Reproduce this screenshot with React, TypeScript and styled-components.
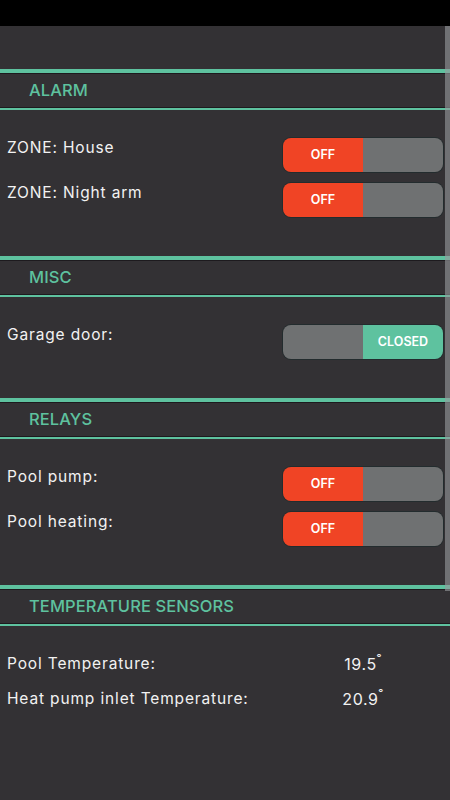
import { createGlobalStyle } from 'styled-components';
import styled from 'styled-components';

const colors = {
  bg: '#333134',
  green: '#5ec29f',
  red: '#f04425',
  gray: '#6f7172',
  dark: '#1d1a1e',
  text: '#f2f2f2',
};

const GlobalStyle = createGlobalStyle`
  html, body {
    margin: 0;
    padding: 0;
    background: ${colors.bg};
  }
  body {
    font-family: Inter, 'Open Sans', sans-serif;
  }
`;

type SwitchRow = { label: string; on: boolean; onText: string; offText: string };
type TempRow = { label: string; value: string };

const alarmRows: SwitchRow[] = [
  { label: 'ZONE: House', on: false, onText: 'ON', offText: 'OFF' },
  { label: 'ZONE: Night arm', on: false, onText: 'ON', offText: 'OFF' },
];
const miscRows: SwitchRow[] = [
  { label: 'Garage door:', on: true, onText: 'CLOSED', offText: 'OPEN' },
];
const relayRows: SwitchRow[] = [
  { label: 'Pool pump:', on: false, onText: 'ON', offText: 'OFF' },
  { label: 'Pool heating:', on: false, onText: 'ON', offText: 'OFF' },
];
const temps: TempRow[] = [
  { label: 'Pool Temperature:', value: '19.5' },
  { label: 'Heat pump inlet Temperature:', value: '20.9' },
];

function Switch(props: { on: boolean; onText: string; offText: string }) {
  const { on, onText, offText } = props;
  return (
    <SwitchBox>
      {on ? <Half $tone="gray" /> : <Half $tone="red">{offText}</Half>}
      {on ? <Half $tone="green">{onText}</Half> : <Half $tone="gray" />}
    </SwitchBox>
  );
}

function Section(props: { title: string; children: React.ReactNode }) {
  return (
    <section>
      <Header>
        <HeaderInner>{props.title}</HeaderInner>
      </Header>
      <Body>{props.children}</Body>
    </section>
  );
}

function SwitchList(props: { rows: SwitchRow[] }) {
  return (
    <>
      {props.rows.map((r) => (
        <Row key={r.label}>
          <Label>{r.label}</Label>
          <Switch on={r.on} onText={r.onText} offText={r.offText} />
        </Row>
      ))}
    </>
  );
}

export default function App() {
  return (
    <Screen>
      <GlobalStyle />
      <StatusBar />
      <TopGap />
      <Section title="ALARM">
        <SwitchList rows={alarmRows} />
      </Section>
      <Section title="MISC">
        <SwitchList rows={miscRows} />
      </Section>
      <Section title="RELAYS">
        <SwitchList rows={relayRows} />
      </Section>
      <Section title="TEMPERATURE SENSORS">
        {temps.map((t) => (
          <TempLine key={t.label}>
            <Label>{t.label}</Label>
            <Value>
              {t.value}
              <Deg>˚</Deg>
            </Value>
          </TempLine>
        ))}
      </Section>
      <ScrollThumb />
    </Screen>
  );
}

const Screen = styled.div`
  position: relative;
  width: 450px;
  height: 800px;
  overflow: hidden;
  background: ${colors.bg};
  display: flex;
  flex-direction: column;
`;
const StatusBar = styled.div`
  height: 26px;
  background: #000;
  flex-shrink: 0;
`;
const TopGap = styled.div`
  height: 43px;
  flex-shrink: 0;
`;
const Header = styled.div`
  border-top: 4px solid ${colors.green};
  border-bottom: 2px solid ${colors.green};
`;
const HeaderInner = styled.h2`
  margin: 0;
  height: 33px;
  line-height: 33px;
  border-top: 1px solid ${colors.dark};
  border-bottom: 1px solid ${colors.dark};
  padding-left: 29px;
  color: ${colors.green};
  font-size: 16.5px;
  font-weight: 500;
  letter-spacing: 0.1px;
`;
const Body = styled.div`
  display: flex;
  flex-direction: column;
  gap: 11px;
  padding: 28px 7px 39px;
`;
const Row = styled.div`
  display: flex;
  justify-content: space-between;
  align-items: flex-start;
  height: 34px;
`;
const TempLine = styled.div`
  display: flex;
  justify-content: space-between;
  align-items: flex-start;
  height: 24px;
`;
const Label = styled.span`
  color: ${colors.text};
  font-size: 15.5px;
  line-height: 20px;
  letter-spacing: 0.85px;
`;
const Value = styled.span`
  width: 160px;
  text-align: center;
  color: ${colors.text};
  font-size: 16px;
  line-height: 20px;
  letter-spacing: 0.6px;
`;
const Deg = styled.span`
  font-size: 15px;
  vertical-align: 4px;
  line-height: 0;
`;
const SwitchBox = styled.div`
  width: 160px;
  height: 34px;
  border-radius: 8px;
  overflow: hidden;
  display: grid;
  grid-template-columns: 80px 80px;
  box-shadow: 0 0 0 1px rgba(20, 40, 40, 0.5);
`;
const Half = styled.div<{ $tone: 'red' | 'gray' | 'green' }>`
  display: flex;
  align-items: center;
  justify-content: center;
  padding-bottom: 2px;
  font-size: 12.5px;
  font-weight: 600;
  color: #fff;
  background: ${(p) =>
    p.$tone === 'red' ? colors.red : p.$tone === 'green' ? colors.green : colors.gray};
`;
const ScrollThumb = styled.div`
  position: absolute;
  right: 0;
  top: 26px;
  width: 5px;
  height: 565px;
  background: rgba(150, 154, 157, 0.62);
`;
